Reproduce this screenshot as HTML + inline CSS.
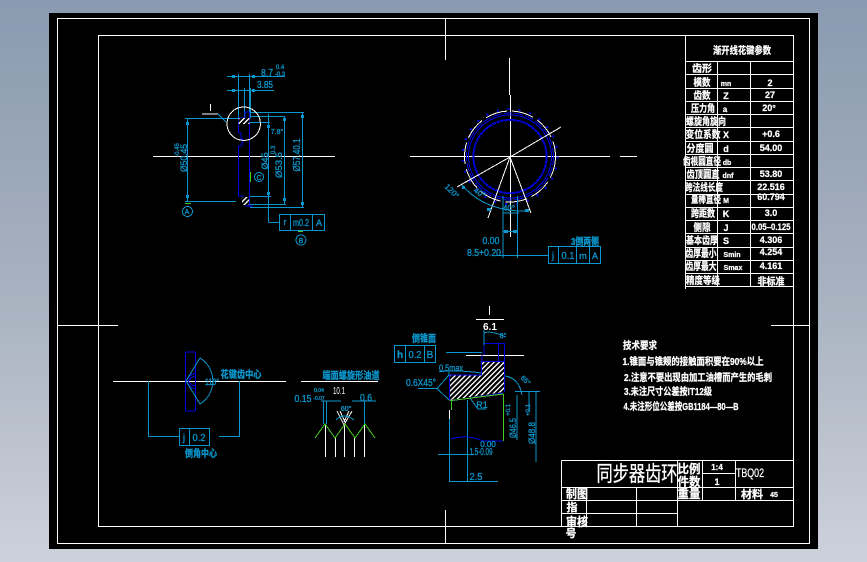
<!DOCTYPE html>
<html lang="zh">
<head>
<meta charset="utf-8">
<title>同步器齿环</title>
<style>
html,body{margin:0;padding:0;width:867px;height:562px;overflow:hidden;background:linear-gradient(180deg,#8a9ab0 0%,#a8b2c0 53%,#cdd1db 100%)}
svg{position:absolute;left:0;top:0;display:block}
text{font-family:"Liberation Sans","Noto Sans CJK SC",sans-serif}
circle,path,rect,polygon{shape-rendering:crispEdges}
.w{stroke:#fff;fill:none;stroke-width:1}
.c{stroke:#0a96cc;fill:none;stroke-width:1}
.b{stroke:#0000e6;fill:none;stroke-width:1}
.g{stroke:#44cc22;fill:none;stroke-width:1}
.tw text{fill:#fff;font-weight:700;font-size:10px;text-anchor:middle;stroke:#fff;stroke-width:.25}
.tc text{fill:#0a96cc;font-size:10px;text-anchor:middle;stroke:#0a96cc;stroke-width:.3}
.cf{fill:#0a96cc}
</style>
</head>
<body>
<svg width="867" height="562" viewBox="0 0 867 562" xmlns="http://www.w3.org/2000/svg">
<defs>
<pattern id="h" width="3.6" height="3.6" patternUnits="userSpaceOnUse" patternTransform="rotate(45)">
<rect width="3.6" height="3.6" fill="#000"/><rect width="1.3" height="3.6" fill="#fff"/>
</pattern>
</defs>
<rect x="49" y="13" width="769" height="536" fill="#000"/>

<!-- frames -->
<g class="w">
<rect x="57.5" y="18.5" width="752" height="525"/>
<rect x="98.5" y="35.5" width="695" height="491"/>
<path d="M58 325.5H118M771 325.5H809M445.5 19V60M445.5 510V543"/>
<!-- parameter table -->
<path d="M685.5 36V289M685.5 61.5H793M685.5 74.5H793M685.5 88.5H793M685.5 101.5H793M685.5 114.5H793M685.5 127.5H793M685.5 141.5H793M685.5 154.5H793M685.5 167.5H793M685.5 180.5H793M685.5 194.5H793M685.5 207.5H793M685.5 220.5H793M685.5 233.5H793M685.5 247.5H793M685.5 260.5H793M685.5 273.5H793M685.5 286.5H793"/>
<path d="M717.5 61V287M750.5 61V287"/>
<!-- title block -->
<path d="M561.5 460.5H793M561.5 460.5V526M561.5 487.5H793M561.5 500.5H793M561.5 513.5H677.5M677.5 460V526M702.5 460V500M735.5 460V500M702.5 473.5H735.5M586.5 487V526M636.5 487V526"/>
</g>

<!-- table text -->
<g class="tw">
<text x="742" y="54" textLength="58" lengthAdjust="spacingAndGlyphs" font-size="10">渐开线花键参数</text>
<text x="702" y="72" textLength="20" lengthAdjust="spacingAndGlyphs">齿形</text>
<text x="702" y="86" textLength="17" lengthAdjust="spacingAndGlyphs">模数</text><text x="726" y="86" style="font-size:7px">mn</text><text x="770" y="86" style="font-size:9px">2</text>
<text x="702" y="99" textLength="17" lengthAdjust="spacingAndGlyphs">齿数</text><text x="726" y="99" style="font-size:9px">Z</text><text x="770" y="98" style="font-size:9px">27</text>
<text x="703" y="112" textLength="24" lengthAdjust="spacingAndGlyphs">压力角</text><text x="725" y="112" style="font-size:8px">a</text><text x="769" y="111" style="font-size:9px">20°</text>
<text x="706" y="125" textLength="40" lengthAdjust="spacingAndGlyphs">螺旋角旋向</text>
<text x="703" y="138" textLength="35" lengthAdjust="spacingAndGlyphs">变位系数</text><text x="726" y="138" style="font-size:9px">X</text><text x="771" y="137" style="font-size:9px">+0.6</text>
<text x="700" y="152" textLength="27" lengthAdjust="spacingAndGlyphs">分度圆</text><text x="726" y="152" style="font-size:9px">d</text><text x="771" y="151" style="font-size:9px">54.00</text>
<text x="702" y="165" textLength="38" lengthAdjust="spacingAndGlyphs">齿根圆直径</text><text x="727" y="165" style="font-size:7px">db</text>
<text x="703" y="178" textLength="33" lengthAdjust="spacingAndGlyphs">齿顶圆直</text><text x="728" y="178" style="font-size:7px">dnf</text><text x="771" y="177" style="font-size:9px">53.80</text>
<text x="704" y="191" textLength="38" lengthAdjust="spacingAndGlyphs">跨法线长度</text><text x="771" y="190" style="font-size:9px">22.516</text>
<text x="706" y="203" textLength="30" lengthAdjust="spacingAndGlyphs">量棒直径</text><text x="726" y="203" style="font-size:7px">M</text><text x="771" y="200" style="font-size:9px">60.794</text>
<text x="703" y="217" textLength="24" lengthAdjust="spacingAndGlyphs">跨距数</text><text x="726" y="217" style="font-size:9px">K</text><text x="771" y="216" style="font-size:9px">3.0</text>
<text x="702" y="231" textLength="17" lengthAdjust="spacingAndGlyphs">侧隙</text><text x="726" y="231" style="font-size:9px">J</text><text x="771" y="230" style="font-size:9px" textLength="39" lengthAdjust="spacingAndGlyphs">0.05–0.125</text>
<text x="702" y="244" textLength="32" lengthAdjust="spacingAndGlyphs">基本齿厚</text><text x="726" y="244" style="font-size:9px">S</text><text x="771" y="243" style="font-size:9px">4.306</text>
<text x="701" y="257" textLength="31" lengthAdjust="spacingAndGlyphs">齿厚最小</text><text x="732" y="257" style="font-size:7px">Smin</text><text x="771" y="255" style="font-size:9px">4.254</text>
<text x="701" y="270" textLength="31" lengthAdjust="spacingAndGlyphs">齿厚最大</text><text x="733" y="270" style="font-size:7px">Smax</text><text x="771" y="269" style="font-size:9px">4.161</text>
<text x="703" y="284" textLength="34" lengthAdjust="spacingAndGlyphs">精度等级</text><text x="771" y="285" textLength="27" lengthAdjust="spacingAndGlyphs">非标准</text>
</g>

<!-- tech requirements -->
<g class="tw">
<text x="640" y="349" textLength="34" lengthAdjust="spacingAndGlyphs">技术要求</text>
<text x="693" y="365" textLength="141" lengthAdjust="spacingAndGlyphs">1.锥面与锥颊的接触面积要在90%以上</text>
<text x="698" y="381" textLength="148" lengthAdjust="spacingAndGlyphs">2.注意不要出现由加工油槽而产生的毛刺</text>
<text x="668" y="395" textLength="88" lengthAdjust="spacingAndGlyphs">3.未注尺寸公差按IT12级</text>
<text x="681" y="410" textLength="115" lengthAdjust="spacingAndGlyphs">4.未注形位公差按GB1184—80—B</text>
</g>

<!-- title block text -->
<g class="tw">
<text x="637" y="481" textLength="81" lengthAdjust="spacingAndGlyphs" style="font-size:21px;font-weight:400;stroke-width:.3">同步器齿环</text>
<text x="689" y="473" textLength="23" lengthAdjust="spacingAndGlyphs" style="font-size:12px">比例</text>
<text x="689" y="486" textLength="23" lengthAdjust="spacingAndGlyphs" style="font-size:12px">件数</text>
<text x="689" y="498" textLength="23" lengthAdjust="spacingAndGlyphs" style="font-size:12px">重量</text>
<text x="717" y="470" style="font-size:8px">1:4</text>
<text x="717" y="485" style="font-size:9px">1</text>
<text x="750" y="477" textLength="28" lengthAdjust="spacingAndGlyphs" style="font-size:12px;font-weight:400">TBQ02</text>
<text x="752" y="498" textLength="22" lengthAdjust="spacingAndGlyphs" style="font-size:11px">材料</text>
<text x="774" y="497" style="font-size:7px">45</text>
<text x="577" y="498" textLength="22" lengthAdjust="spacingAndGlyphs" style="font-size:12px">制图</text>
<text x="572" y="511" style="font-size:11px">指</text>
<text x="577" y="526" textLength="22" lengthAdjust="spacingAndGlyphs" style="font-size:12px">审核</text>
<text x="571" y="537" style="font-size:11px">号</text>
</g>

<!-- top-left view -->
<path class="w" d="M153 156.5H335"/>
<path class="c" d="M227 76.5H285M227 90.5H274M238.5 74V118M249.5 74V112M244.5 88V118M250.5 88V118M185 118.5H238M187.5 118V201M185 201.5H236M250 112.5H304M251 116.5H285M250 122.5H270M250 196.5H271M250 204.5H286M250 207.5H304M268.5 114V222M284.5 116V205M302.5 112V207M268.5 222.5H279"/>
<rect class="c" x="279.5" y="214.5" width="45" height="16"/>
<path class="c" d="M290.5 214V230M312.5 214V230"/>
<path class="b" d="M238.5 118V133H241V139H243V142H242V146H238.5V196M249.5 112V207M238.5 196H243M243 196V202M249.5 112H245V118H238M243 204H246M245 206H253"/>
<path class="g" d="M250.5 172V182M185 203.5H191M298 231.5H303"/>
<circle class="w" cx="243.7" cy="123.7" r="16.7"/>
<path class="w" d="M202 114H218M210.5 104V111"/>
<path class="c" d="M218 114L226 122"/>
<rect x="238.5" y="118" width="11" height="6" fill="url(#h)"/>
<rect x="242" y="197" width="7" height="8" fill="url(#h)"/>
<g class="cf">
<rect x="232" y="75" width="3" height="3"/><rect x="252" y="75" width="3" height="3"/><rect x="232" y="89" width="3" height="3"/><rect x="252" y="89" width="3" height="3"/>
<rect x="186" y="122" width="3" height="3"/><rect x="186" y="195" width="3" height="3"/><rect x="267" y="125" width="3" height="3"/><rect x="267" y="192" width="3" height="3"/><rect x="283" y="118" width="3" height="3"/><rect x="283" y="198" width="3" height="3"/><rect x="301" y="115" width="3" height="3"/><rect x="301" y="202" width="3" height="3"/>
</g>
<circle class="c" cx="187.5" cy="211.5" r="5"/><circle class="c" cx="301" cy="240" r="5"/><circle class="c" cx="259" cy="177" r="4.5"/>
<g class="tc">
<text x="267" y="76" textLength="12" lengthAdjust="spacingAndGlyphs" style="font-size:10px">8.7</text>
<text x="280" y="69" style="font-size:6px">0.4</text><text x="280" y="76" style="font-size:6px">-0.3</text>
<text x="265" y="88" textLength="16" lengthAdjust="spacingAndGlyphs">3.85</text>
<text x="277" y="134" style="font-size:7px">7.8°</text>
<text x="187" y="214" style="font-size:7px">A</text><text x="301" y="243" style="font-size:7px">B</text><text x="259" y="180" style="font-size:7px">C</text>
<text x="285" y="225" style="font-size:9px">r</text><text x="301" y="226" textLength="16" lengthAdjust="spacingAndGlyphs" style="font-size:10px">m0.2</text><text x="319" y="226" style="font-size:9px">A</text>
<text transform="translate(187,158) rotate(-90)" textLength="28" lengthAdjust="spacingAndGlyphs" style="font-size:9px">Ø50.45</text>
<text transform="translate(179,150) rotate(-90)" style="font-size:6px">-0.45</text>
<text transform="translate(268,161) rotate(-90)" style="font-size:9px">Ø45</text>
<text transform="translate(282,165) rotate(-90)" textLength="26" lengthAdjust="spacingAndGlyphs" style="font-size:9px">Ø53.5</text>
<text transform="translate(275,150) rotate(-90)" style="font-size:6px">0.3</text>
<text transform="translate(300,155) rotate(-90)" textLength="33" lengthAdjust="spacingAndGlyphs" style="font-size:10px">Ø57.40.1</text>
</g>

<!-- gear view -->
<path class="w" d="M410 156.5H610M620 156.5H637M509.5 58V95M510.5 95V237"/>
<circle class="b" cx="510" cy="156.5" r="47.5" stroke-dasharray="2 9.05" style="stroke-width:2"/>
<circle class="w" cx="510" cy="156.5" r="45.5" stroke-dasharray="22 5"/>
<circle class="b" cx="510" cy="156.5" r="43.5" stroke-dasharray="9 2"/>
<circle class="b" cx="510" cy="156.5" r="41.5"/>
<circle class="b" cx="510" cy="156.5" r="37"/>
<circle class="b" cx="510" cy="156.5" r="36" stroke-dasharray="3 1"/>
<path class="w" d="M510 157L561 127M510 157L457 187M510 157L488 218M510 157L531 213"/>
<path class="c" d="M462 185Q485 212 527 211M503 196V258M517.5 196V258M503 213H519M503 231.5H517M496 255.5H548"/>
<rect class="c" x="548.5" y="246.5" width="52" height="17"/>
<path class="c" d="M558.5 246V263M576.5 246V263M589.5 246V263"/>
<g class="cf"><rect x="504" y="230" width="4" height="3"/><rect x="513" y="230" width="4" height="3"/><rect x="487" y="208" width="4" height="3"/><rect x="525" y="209" width="4" height="3"/><rect x="462" y="186" width="3" height="3"/></g>
<g class="tc">
<text transform="translate(450,193) rotate(45)" style="font-size:8px">120°</text>
<text transform="translate(478,195) rotate(35)" style="font-size:8px">40°</text>
<text x="509" y="211" style="font-size:8px">40°</text>
<text x="491" y="244" textLength="17" lengthAdjust="spacingAndGlyphs">0.00</text>
<text x="484" y="256" textLength="34" lengthAdjust="spacingAndGlyphs">8.5+0.20</text>
<text x="585" y="245" textLength="28" lengthAdjust="spacingAndGlyphs" style="font-weight:700">3倒两侧</text>
<text x="553" y="259" style="font-size:10px">j</text><text x="568" y="259" textLength="13" lengthAdjust="spacingAndGlyphs">0.1</text><text x="583" y="259" style="font-size:9px">m</text><text x="595" y="259" style="font-size:9px">A</text>
</g>

<!-- lower-left view -->
<path class="w" d="M113 381.5H286M301 381.5H378"/>
<path class="c" d="M148.5 381V436.5H179M219 436.5H239.5V381"/>
<rect class="c" x="179.5" y="428.5" width="30" height="17"/>
<path class="c" d="M189.5 428V445"/>
<rect class="b" x="185.5" y="352" width="10" height="59" rx="1.5"/>
<path class="b" d="M186 381Q190 374 196 373M186 381Q190 388 196 389M188 381Q192 376 196 376M188 381Q192 386 196 386"/>
<path class="c" d="M186 381L200 358A27 27 0 0 1 200 404L186 381"/>
<g class="tc">
<text x="212" y="385" style="font-size:9px" textLength="14" lengthAdjust="spacingAndGlyphs">118°</text>
<text x="241" y="378" textLength="41" lengthAdjust="spacingAndGlyphs" style="font-weight:700">花键齿中心</text>
<text x="201" y="457" textLength="32" lengthAdjust="spacingAndGlyphs" style="font-weight:700">倒角中心</text>
<text x="184" y="441" style="font-size:10px">j</text><text x="199" y="441" textLength="13" lengthAdjust="spacingAndGlyphs">0.2</text>
<text x="351" y="379" textLength="57" lengthAdjust="spacingAndGlyphs" style="font-weight:700">端面螺旋形油道</text>
<text x="303" y="402" textLength="17" lengthAdjust="spacingAndGlyphs">0.15</text>
<text x="319" y="392" style="font-size:5px">0.04</text><text x="319" y="400" style="font-size:5px">-0.07</text>
<text x="366" y="401" textLength="12" lengthAdjust="spacingAndGlyphs">0.6</text>
<text x="346" y="411" style="font-size:7px">60°</text>
</g>
<text x="339" y="394" fill="#fff" font-size="10" text-anchor="middle" textLength="12" lengthAdjust="spacingAndGlyphs">10.1</text>
<path class="w" d="M325.5 424V457M335.5 438V457M344.5 424V457M354.5 438V457M364.5 424V457"/>
<path class="c" d="M321 401H341M352 401H376M323.5 401V424M326.5 401V424M364.5 401V424"/>
<path class="w" d="M337 411L344 425L352 411M340 411L345 422M349 411L344 422" stroke-width=".8"/>
<path class="c" d="M336 420Q344 412 354 420"/>
<path class="g" d="M315 438L325 424L335 438L345 424L355 438L365 424L375 438"/>

<!-- section view -->
<polygon points="449.7,375 481.7,375 481.7,361.7 504.3,361.7 504.3,392 450,400" fill="url(#h)"/>
<path class="w" d="M489.5 306V315M476 319.5H504M466 355.5H524M449.5 410V419"/>
<path class="b" d="M482 361V355M484 355V343.5H504.5V392M498.5 343V361M481.7 375V361.7H504.5M449.7 375H481.7M449.7 375V400"/>
<path class="g" d="M503.5 394V441M451.5 401V410"/>
<path class="c" d="M446 352.5H482M449.5 419V482M467.5 400V481M438 454.5H474M449 481.5H498M515 391.5H540M517 395V440M536 392V462M529 392V412M449 375V372M439 371.5Q462 370 481 373M484 333Q490 330 506 337M484 330V345M418 388.5H437M437 388.5L449 375M437 388.5L449 400"/>
<rect class="c" x="394.5" y="345.5" width="41" height="17"/>
<path class="c" d="M405.5 345V362M424.5 345V362"/>
<path class="c" d="M505 376Q519 378 522 395M470 398L478 409H486"/>
<path class="b" d="M451 439Q467 434 483 441H503M450 401L503 393"/>
<path class="g" d="M449.7 400.7L503.3 394"/>
<g class="tc">
<text x="451" y="371" textLength="24" lengthAdjust="spacingAndGlyphs" style="font-size:9px">0.5max</text>
<text x="421" y="386" textLength="30" lengthAdjust="spacingAndGlyphs" style="font-size:10px">0.6X45°</text>
<text x="424" y="342" textLength="24" lengthAdjust="spacingAndGlyphs" style="font-weight:700">倒锥面</text>
<text x="400" y="358" style="font-size:10px;font-weight:700">h</text><text x="415" y="358" textLength="13" lengthAdjust="spacingAndGlyphs">0.2</text><text x="430" y="358" style="font-size:10px">B</text>
<text x="482" y="408" style="font-size:9px">R1</text>
<text x="488" y="447" style="font-size:8px">0.00</text>
<text x="481" y="455" textLength="23" lengthAdjust="spacingAndGlyphs" style="font-size:10px">1.5-0.09</text>
<text x="476" y="480" textLength="13" lengthAdjust="spacingAndGlyphs">2.5</text>
<text x="503" y="338" style="font-size:7px">8°</text>
<text transform="translate(524,382) rotate(45)" style="font-size:7px">65°</text>
<text transform="translate(516,428) rotate(-90)" textLength="20" lengthAdjust="spacingAndGlyphs" style="font-size:9px">Ø46.5</text>
<text transform="translate(535,433) rotate(-90)" textLength="22" lengthAdjust="spacingAndGlyphs" style="font-size:9px">Ø48.8</text>
<text transform="translate(510,410) rotate(-90)" style="font-size:6px">+0.1</text>
<text transform="translate(530,410) rotate(-90)" style="font-size:6px">+0.1</text>
</g>
<text x="490" y="330" fill="#fff" font-size="10" font-weight="700" text-anchor="middle">6.1</text>
</svg>
</body>
</html>
